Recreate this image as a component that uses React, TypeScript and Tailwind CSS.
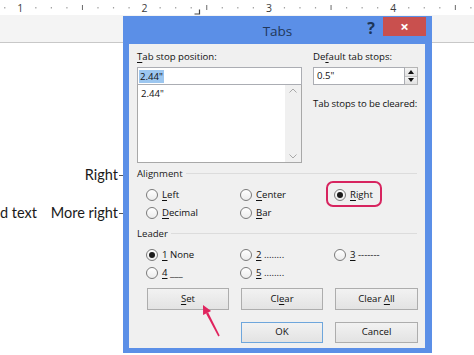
import type { ReactNode } from "react";

const INCH = 124.3;
const ORIGIN = 20.3 - INCH;

const Ruler = () => {
  const marks = Array.from({ length: 40 }, (_, k) => k);
  return (
    <svg width="474" height="15" className="block bg-white">
      {marks.map((k) => {
        const x = ORIGIN + (k * INCH) / 8;
        if (x < 0 || x > 474) return null;
        if (k % 8 === 0)
          return (
            <text key={k} x={x} y={11.5} fontSize="10.5" fill="#3c3c3c" textAnchor="middle" fontFamily="Open Sans, sans-serif">
              {k / 8}
            </text>
          );
        if (k % 4 === 0) return <line key={k} x1={x} x2={x} y1={5} y2={10} stroke="#6a6a6a" strokeWidth="1" />;
        return <rect key={k} x={x - 0.6} y={7.2} width="1.2" height="1.2" fill="#8a8a8a" />;
      })}
      <path d="M199.5 9.5 V14 H194.5" stroke="#444" strokeWidth="1.2" fill="none" />
    </svg>
  );
};

const Acc = ({ pre = "", k, post = "" }: { pre?: string; k: string; post?: string }) => (
  <span className="whitespace-pre">
    {pre}
    <span className="underline underline-offset-[2px] decoration-[0.8px]">{k}</span>
    {post}
  </span>
);

const Radio = ({ checked = false, children }: { checked?: boolean; children: ReactNode }) => (
  <div className="flex items-center gap-[4px] h-[18px]">
    <span className="w-[12px] h-[12px] rounded-full border border-[#7a7a7a] bg-gradient-to-b from-[#ffffff] to-[#ececec] flex items-center justify-center">
      {checked && <span className="w-[6px] h-[6px] rounded-full bg-[#1b1b1b]" />}
    </span>
    <span>{children}</span>
  </div>
);

const Button = ({ children, w, def = false }: { children: ReactNode; w: string; def?: boolean }) => (
  <div
    className={`${w} h-full flex items-center justify-center border bg-gradient-to-b from-[#f2f2f2] to-[#e3e3e3] ${
      def ? "border-[#6ea6dc]" : "border-[#adadad]"
    }`}
  >
    <span>{children}</span>
  </div>
);

const Section = ({ title }: { title: string }) => (
  <div className="flex items-center h-[16px] pl-[8px] pr-[8px]">
    <span className="text-[#1a1a1a]">{title}</span>
    <span className="flex-1 border-t border-[#dcdcdc] ml-[3px] -mt-[2px]" />
  </div>
);

const Dialog = () => (
  <div className="absolute left-[123px] top-[16px] w-[309px] h-[337px] bg-[#5b8fe7] flex flex-col">
    <div className="relative h-[28px] flex items-start justify-end pr-[6px]">
      <span className="absolute inset-0 flex items-center justify-center pt-[2px] text-[13.5px] text-[#22385a]">Tabs</span>
      <span className="relative mt-[3px] mr-[8px] text-[16px] font-bold leading-[18px] text-[#1d3558]">?</span>
      <div className="relative mt-[1px] w-[43px] h-[19px] bg-[#c9504e] flex items-center justify-center text-white text-[15px] font-bold leading-none">
        ×
      </div>
    </div>
    <div className="flex-1 ml-[6px] mr-[7px] mb-[5px] bg-[#f0f0f0] flex flex-col text-[9.6px] text-[#111]">
      <div className="flex gap-[11px] pl-[8px] pt-[5px]">
        <div className="w-[165px] flex flex-col">
          <div className="h-[16px] leading-[16px]">
            <Acc k="T" post="ab stop position:" />
          </div>
          <div className="mt-[2px] h-[18px] bg-white border border-[#abadb3] flex items-center px-[1px]">
            <span className="bg-[#9cc6ef] px-[1px] leading-[13px]">2.44"</span>
          </div>
          <div className="h-[78px] bg-white border border-[#a8a8a8] border-t-0 flex">
            <div className="flex-1 pl-[3px] pt-[2px]">2.44"</div>
            <div className="w-[16px] bg-[#f0f0f0] flex flex-col items-center justify-between py-[3px] text-[#a8a8a8]">
              <svg width="8" height="5" viewBox="0 0 8 5">
                <path d="M0.5 4.5 L4 1 L7.5 4.5" stroke="currentColor" fill="none" />
              </svg>
              <svg width="8" height="5" viewBox="0 0 8 5">
                <path d="M0.5 0.5 L4 4 L7.5 0.5" stroke="currentColor" fill="none" />
              </svg>
            </div>
          </div>
        </div>
        <div className="w-[105px] flex flex-col">
          <div className="h-[16px] leading-[16px] whitespace-nowrap">
            <Acc pre="De" k="f" post="ault tab stops:" />
          </div>
          <div className="mt-[2px] h-[18px] flex">
            <div className="flex-1 bg-white border border-[#abadb3] flex items-center pl-[3px]">0.5"</div>
            <div className="w-[13px] flex flex-col border border-l-0 border-[#b5b5b5]">
              <div className="flex-1 bg-gradient-to-b from-[#f4f4f4] to-[#e2e2e2] border-b border-[#c4c4c4] flex items-center justify-center">
                <svg width="6" height="4" viewBox="0 0 6 4">
                  <path d="M0 4 L3 0 L6 4 Z" fill="#111" />
                </svg>
              </div>
              <div className="flex-1 bg-gradient-to-b from-[#f4f4f4] to-[#e2e2e2] flex items-center justify-center">
                <svg width="6" height="4" viewBox="0 0 6 4">
                  <path d="M0 0 L3 4 L6 0 Z" fill="#111" />
                </svg>
              </div>
            </div>
          </div>
          <div className="mt-[11px] h-[16px] leading-[16px] whitespace-nowrap tracking-[-0.1px]">Tab stops to be cleared:</div>
        </div>
      </div>

      <div className="mt-[3px]">
        <Section title="Alignment" />
      </div>
      <div className="mt-[4px] pl-[17px] grid grid-cols-[94px_94px_94px]">
        <Radio>
          <Acc k="L" post="eft" />
        </Radio>
        <Radio>
          <Acc k="C" post="enter" />
        </Radio>
        <div className="relative">
          <div className="absolute left-[-8px] top-[-5px] w-[56px] h-[26px] rounded-[7px] border-[2.5px] border-[#d7245f]" />
          <Radio checked>
            <Acc k="R" post="ight" />
          </Radio>
        </div>
        <Radio>
          <Acc k="D" post="ecimal" />
        </Radio>
        <Radio>
          <Acc k="B" post="ar" />
        </Radio>
      </div>

      <div className="mt-[4px]">
        <Section title="Leader" />
      </div>
      <div className="mt-[4px] pl-[17px] grid grid-cols-[94px_94px_94px]">
        <Radio checked>
          <Acc k="1" post=" None" />
        </Radio>
        <Radio>
          <Acc k="2" post=" ........" />
        </Radio>
        <Radio>
          <Acc k="3" post=" -------" />
        </Radio>
        <Radio>
          <Acc k="4" post=" ___" />
        </Radio>
        <Radio>
          <Acc k="5" post=" ........" />
        </Radio>
      </div>

      <div className="mt-[6px] h-[22px] pl-[18px] flex gap-[12px]">
        <Button w="w-[82px]">
          <Acc k="S" post="et" />
        </Button>
        <Button w="w-[82px]">
          <Acc pre="Cl" k="e" post="ar" />
        </Button>
        <Button w="w-[83px]">
          <Acc pre="Clear " k="A" post="ll" />
        </Button>
      </div>
      <div className="mt-[12px] h-[21px] pl-[112px] flex gap-[12px]">
        <Button w="w-[82px]" def>
          OK
        </Button>
        <Button w="w-[83px]">Cancel</Button>
      </div>
    </div>
  </div>
);

export default function App() {
  return (
    <div className="relative w-[474px] h-[355px] overflow-hidden bg-white font-['Open_Sans',sans-serif]">
      <Ruler />
      <div className="h-[28px] bg-[#f4f4f4] border-b border-[#c8c8c8]" />
      <div className="pt-[122px] font-['Lato',sans-serif] text-[14.5px] text-[#1a1a1a]">
        <div className="w-[123px] h-[20px] flex items-center justify-end">
          <span>Right</span>
          <span className="ml-[1px] w-[4px] h-px bg-[#555]" />
        </div>
        <div className="mt-[18px] w-[123px] h-[20px] flex items-center justify-between">
          <span>d text</span>
          <span className="flex items-center">
            <span>More right</span>
            <span className="ml-[1px] w-[4px] h-px bg-[#555]" />
          </span>
        </div>
      </div>
      <Dialog />
      <svg className="absolute left-[195px] top-[300px]" width="30" height="40" viewBox="0 0 30 40">
        <polygon points="8,5 16.1,10.9 8.1,15.1" fill="#e0245e" />
        <polygon points="11,13.6 13.2,12.4 24.7,35.6 23.3,36.4" fill="#e0245e" />
      </svg>
    </div>
  );
}
